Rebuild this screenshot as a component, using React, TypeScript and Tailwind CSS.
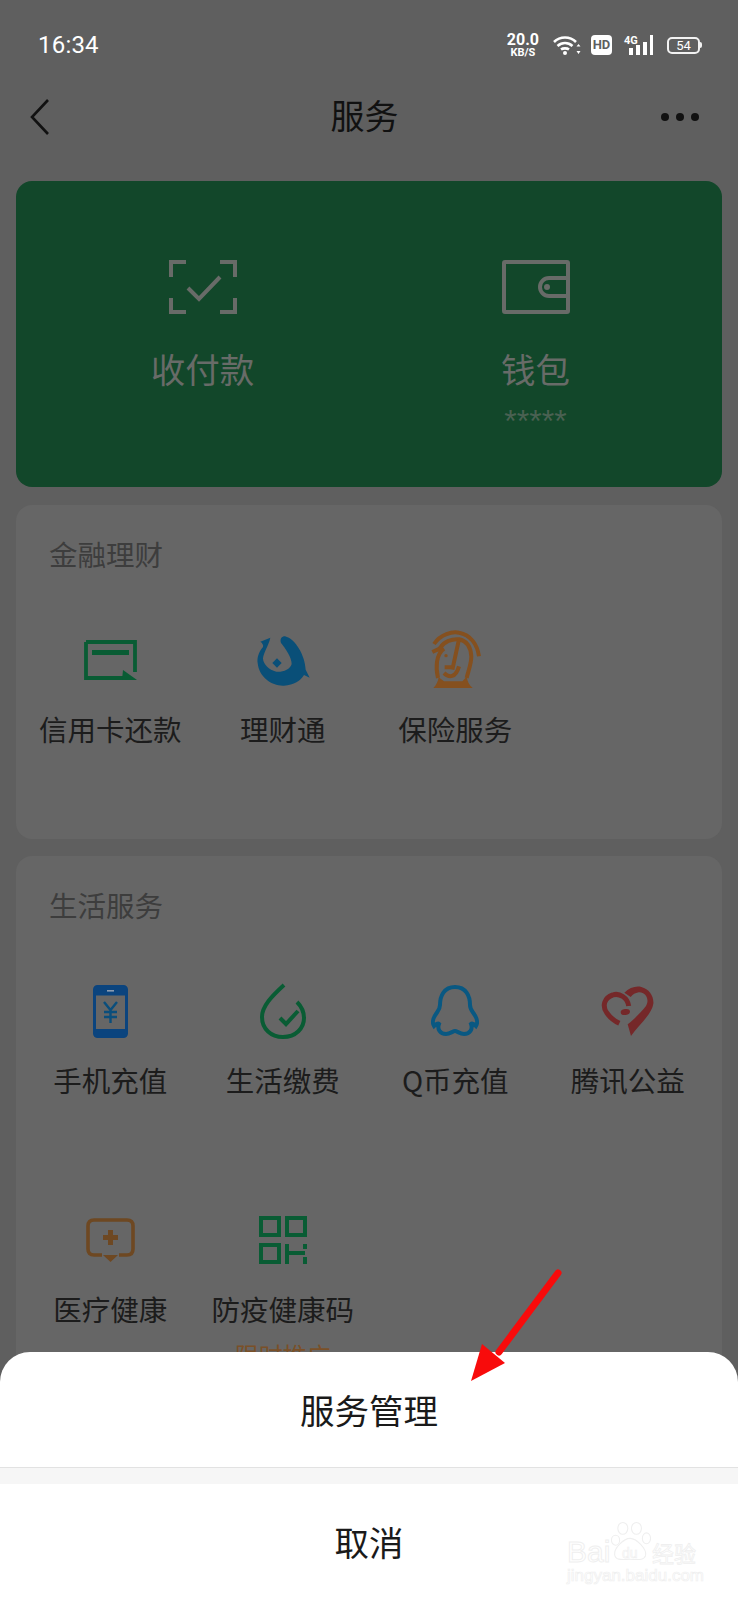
const ServiceItem = ({ icon, label, note }: { icon: React.ReactNode; label: string; note?: string }) => (
  <div className="flex flex-col items-center">
    <div className="flex h-[56px] items-center justify-center">{icon}</div>
    <div className="mt-[21px] whitespace-nowrap text-[28.5px] leading-[40px] text-[#1c1c1c]">{label}</div>
    {note && <div className="mt-[10px] whitespace-nowrap text-[24px] leading-[32px] text-[#7a5028]">{note}</div>}
  </div>
);

const CardIcon = () => (
  <svg width="53" height="40" viewBox="0 0 53 40" fill="none">
    <path d="M2 2H51V32M42 38H2V2" stroke="#095c34" strokeWidth="3.8" />
    <rect x="8" y="10" width="37" height="5" fill="#095c34" />
    <path d="M39 30L53 40H38Z" fill="#095c34" />
  </svg>
);

const FishIcon = () => (
  <svg width="68" height="62" viewBox="0 0 204 186" fill="#094f78">
    <path d="M64 26L34 38C40 42 44 48 42 54C28 70 24 88 26 102C30 145 70 172 105 170C135 168 155 155 165 138L182 146L170 122C168 80 140 30 108 22C98 22 92 30 96 42C110 60 128 85 128 105C124 122 100 130 82 128C60 124 42 105 42 88C44 70 58 52 64 26Z" />
    <path d="M84 88L98 102L84 116L70 102Z" />
  </svg>
);

const InsuranceIcon = () => (
  <svg width="62" height="64" viewBox="0 0 186 192" fill="none" stroke="#85501f" strokeWidth="12">
    <path d="M30 48C50 18 85 10 105 14C140 20 160 50 165 85" />
    <path d="M48 60C60 40 85 32 105 34C125 38 140 55 142 85C142 110 132 130 128 150" />
    <path d="M25 72L55 58M60 62C35 80 35 120 42 150" />
    <path d="M105 34L85 125M62 118H90M60 135C75 150 95 150 105 115" />
    <circle cx="66" cy="83" r="5" fill="#85501f" stroke="none" />
    <path d="M28 180C38 170 42 160 44 148L60 160H115L128 146C130 160 136 172 146 180Z" fill="#85501f" stroke="none" />
  </svg>
);

const PhoneIcon = () => (
  <svg width="35" height="53" viewBox="0 0 35 53">
    <rect x="1.5" y="1.5" width="32" height="50" rx="3" fill="none" stroke="#0b447e" strokeWidth="3" />
    <rect x="1.5" y="1.5" width="32" height="9" rx="2" fill="#0b447e" />
    <rect x="1.5" y="44" width="32" height="8" rx="2" fill="#0b447e" />
    <rect x="14" y="5" width="7" height="1.6" fill="#8a9bb0" />
    <path d="M11 17L17.5 25L24 17M17.5 25V38M11 27H24M11 32H24" fill="none" stroke="#0a4e7c" strokeWidth="2.4" />
  </svg>
);

const LeafIcon = () => (
  <svg width="46" height="56" viewBox="0 0 46 56" fill="none" stroke="#095c34" strokeWidth="4">
    <path d="M24 2C12 13 2 23 2 34C2 46 11 54 23 54C36 54 44 45 44 35C44 28 41 23 37 19" />
    <path d="M20 35L26 41L38 28" />
  </svg>
);

const PenguinIcon = () => (
  <svg width="48" height="52" viewBox="0 0 48 52" fill="none" stroke="#095882" strokeWidth="4">
    <path d="M24 2C13 2 9 11 9 20C9 24 7 26 5 29C2 33 1 38 3 41C5 39 7 38 8 39C6 44 9 49 15 49C19 49 22 46 24 46C26 46 29 49 33 49C39 49 42 44 40 39C41 38 43 39 45 41C47 38 46 33 43 29C41 26 39 24 39 20C39 11 35 2 24 2Z" />
  </svg>
);

const HeartIcon = () => (
  <svg width="64" height="60" viewBox="0 0 192 180" fill="#752829">
    <path d="M98 75C95 50 70 35 50 42C25 50 18 75 32 95C42 110 55 120 70 127" fill="none" stroke="#752829" strokeWidth="15" />
    <path d="M105 165L95 130C110 118 135 95 150 75C162 55 148 32 128 34C118 36 110 40 104 48L85 35C100 20 120 14 136 18C160 24 174 46 172 68C168 100 125 135 105 165Z" />
    <ellipse cx="88" cy="93" rx="14" ry="9" transform="rotate(-8 88 93)" />
  </svg>
);

const ClinicIcon = () => (
  <svg width="49" height="44" viewBox="0 0 49 44" fill="none">
    <path d="M16 37H8C4 37 2 35 2 31V8C2 4 4 2 8 2H41C45 2 47 4 47 8V31C47 35 45 37 41 37H33" stroke="#6e4822" strokeWidth="3.6" />
    <path d="M17 37H32L24.5 44Z" fill="#6e4822" />
    <path d="M24.5 12V27M17 19.5H32" stroke="#6e4822" strokeWidth="5" />
  </svg>
);

const CodeIcon = () => (
  <svg width="48" height="48" viewBox="0 0 48 48" fill="none" stroke="#095c34" strokeWidth="4">
    <rect x="2" y="2" width="18" height="17" />
    <rect x="28" y="2" width="18" height="17" />
    <rect x="2" y="29" width="18" height="17" />
    <path d="M28 28V48M28 37H46M46 28V33M46 41V48" />
  </svg>
);

const ScanIcon = () => (
  <svg width="68" height="54" viewBox="0 0 68 54" fill="none" stroke="#686b68" strokeWidth="4">
    <path d="M17 2H2V17M51 2H66V17M2 38V52H17M66 38V52H51" />
    <path d="M19 28L30 39L51 17" />
  </svg>
);

const WalletIcon = () => (
  <svg width="68" height="54" viewBox="0 0 68 54" fill="none" stroke="#686b68" strokeWidth="4">
    <rect x="2" y="2" width="64" height="50" rx="1" />
    <path d="M66 18H47C42 18 38 22 38 27C38 32 42 36 47 36H66" />
    <circle cx="45" cy="27" r="3" fill="#686b68" stroke="none" />
  </svg>
);

const WifiIcon = () => (
  <svg width="28" height="20" viewBox="0 0 28 20" fill="none" stroke="#fff" strokeWidth="2.6">
    <path d="M1 7C7 1 17 1 23 7M4.500 11C9 7 15 7 19.500 11M8 14.500C10 13 14 13 16 14.500" />
    <circle cx="12" cy="18" r="2" fill="#fff" stroke="none" />
    <path d="M25.500 9L27.500 11.500H23.500ZM25.500 19L27.500 16H23.500Z" fill="#fff" stroke="none" />
  </svg>
);

const Signal = () => (
  <div className="relative h-[20px] w-[29px]">
    <span className="absolute left-0 top-0 font-['Roboto',sans-serif] text-[11px] font-bold leading-[11px] text-white">4G</span>
    <div className="absolute bottom-0 right-0 flex items-end gap-[3px]">
      <div className="h-[7px] w-[4px] bg-white" />
      <div className="h-[10px] w-[4px] bg-white" />
      <div className="h-[13px] w-[4px] bg-white" />
      <div className="h-[20px] w-[3px] bg-white" />
    </div>
  </div>
);

const Battery = () => (
  <div className="flex items-center">
    <div className="flex h-[17px] w-[33px] items-center justify-center rounded-[5px] border-2 border-[#f2f2f2] font-['Roboto',sans-serif] text-[13px] leading-none text-white">54</div>
    <div className="h-[6px] w-[2px] rounded-r bg-[#f2f2f2]" />
  </div>
);

const PawMark = () => (
  <svg width="40" height="44" viewBox="0 0 44 44" fill="#fff" stroke="#efefef" strokeWidth="1.2">
    <ellipse cx="13" cy="7" rx="5.500" ry="6.500" />
    <ellipse cx="28" cy="7" rx="5.500" ry="6.500" />
    <ellipse cx="39" cy="18" rx="4.500" ry="6" />
    <ellipse cx="5" cy="20" rx="4.500" ry="5.500" />
    <path d="M21 18C28 18 40 30 38 37C36 43 28 41 21 41C14 41 5 43 4 36C3 29 14 18 21 18Z" />
  </svg>
);

export default function App() {
  return (
    <div className="relative h-[1600px] w-[738px] overflow-hidden bg-[#5f5f5f] font-['Noto_Sans_CJK_SC',sans-serif]">
      <div className="flex h-[90px] items-center justify-between pl-[38px] pr-[36px]">
        <span className="font-['Roboto',sans-serif] text-[24px] tracking-[0.2px] text-white">16:34</span>
        <div className="flex items-center">
          <div className="flex flex-col items-center font-['Roboto',sans-serif] font-bold text-white">
            <span className="text-[16px] leading-[15px]">20.0</span>
            <span className="text-[11px] leading-[11px]">KB/S</span>
          </div>
          <div className="ml-[14px]"><WifiIcon /></div>
          <div className="ml-[10px] flex h-[20px] w-[21px] items-center justify-center rounded-[4px] bg-white font-['Roboto',sans-serif] text-[13px] font-bold text-[#5f5f5f]">HD</div>
          <div className="ml-[12px]"><Signal /></div>
          <div className="ml-[14px]"><Battery /></div>
        </div>
      </div>

      <div className="flex h-[54px] items-center justify-between pl-[30px] pr-[39px]">
        <svg width="20" height="36" viewBox="0 0 20 36" fill="none" stroke="#111" strokeWidth="2.6">
          <path d="M18 1L2 18L18 35" />
        </svg>
        <span className="mb-[4px] ml-[18px] text-[34px] leading-none text-[#111]">服务</span>
        <div className="flex gap-[7px]">
          <div className="h-[8px] w-[8px] rounded-full bg-[#111]" />
          <div className="h-[8px] w-[8px] rounded-full bg-[#111]" />
          <div className="h-[8px] w-[8px] rounded-full bg-[#111]" />
        </div>
      </div>

      <div className="mx-4 mt-[37px] grid h-[306px] grid-cols-2 rounded-[16px] bg-[#12472a] px-5 pt-[79px]">
        <div className="flex flex-col items-center">
          <ScanIcon />
          <div className="mt-[30px] text-[34.5px] leading-[48px] text-[#686b68]">收付款</div>
        </div>
        <div className="flex flex-col items-center">
          <WalletIcon />
          <div className="mt-[30px] text-[34.5px] leading-[48px] text-[#686b68]">钱包</div>
          <div className="mt-[13px] font-['Liberation_Sans',sans-serif] text-[32px] leading-[32px] text-[#4a6152]">*****</div>
        </div>
      </div>

      <div className="mx-4 mt-[18px] h-[334px] rounded-[16px] bg-[#666666] pt-[29px]">
        <div className="pl-[33px] text-[28.5px] leading-[40px] text-[#3d3d3d]">金融理财</div>
        <div className="mt-[58px] grid grid-cols-4 px-2">
          <ServiceItem icon={<CardIcon />} label="信用卡还款" />
          <ServiceItem icon={<FishIcon />} label="理财通" />
          <ServiceItem icon={<InsuranceIcon />} label="保险服务" />
        </div>
      </div>

      <div className="mx-4 mt-[17px] h-[600px] rounded-[16px] bg-[#666666] pt-[29px]">
        <div className="pl-[33px] text-[28.5px] leading-[40px] text-[#3d3d3d]">生活服务</div>
        <div className="mt-[58px] grid grid-cols-4 gap-y-[112px] px-2">
          <ServiceItem icon={<PhoneIcon />} label="手机充值" />
          <ServiceItem icon={<LeafIcon />} label="生活缴费" />
          <ServiceItem icon={<PenguinIcon />} label="Q币充值" />
          <ServiceItem icon={<HeartIcon />} label="腾讯公益" />
          <ServiceItem icon={<ClinicIcon />} label="医疗健康" />
          <ServiceItem icon={<CodeIcon />} label="防疫健康码" note="限时推广" />
        </div>
      </div>

      <div className="absolute inset-x-0 bottom-0 top-[1352px] flex flex-col overflow-hidden rounded-t-[30px] bg-white text-[#1a1a1a]">
        <div className="flex h-[116px] items-center justify-center border-b border-[#e2e2e2] text-[34.5px]">服务管理</div>
        <div className="h-[16px] bg-[#f6f6f6]" />
        <div className="flex flex-1 items-center justify-center text-[34.5px]">取消</div>
      </div>

      <svg className="absolute left-[465px] top-[1268px]" width="100" height="118" viewBox="0 0 100 118" fill="#f80b0b">
        <path d="M93 5L34 84" stroke="#f80b0b" strokeWidth="7" strokeLinecap="round" />
        <path d="M6 113L17 76L40 95Z" />
      </svg>

      <div className="absolute left-[567px] top-[1520px] h-[64px] w-[132px] select-none">
        <div className="absolute left-[44px] top-0"><PawMark /></div>
        <span className="absolute left-0 top-[14px] font-['Liberation_Sans',sans-serif] text-[30px] leading-[36px] text-white [-webkit-text-stroke:1px_#efefef]">Bai</span>
        <span className="absolute left-[55px] top-[25px] font-['Liberation_Sans',sans-serif] text-[14px] leading-[16px] text-white [-webkit-text-stroke:0.6px_#efefef]">du</span>
        <span className="absolute left-[85px] top-[18px] text-[22px] leading-[28px] text-white [-webkit-text-stroke:0.8px_#efefef]">经验</span>
        <span className="absolute left-0 top-[47px] whitespace-nowrap font-['Liberation_Sans',sans-serif] text-[17px] leading-[18px] text-white [-webkit-text-stroke:0.7px_#efefef]">jingyan.baidu.com</span>
      </div>
    </div>
  );
}
